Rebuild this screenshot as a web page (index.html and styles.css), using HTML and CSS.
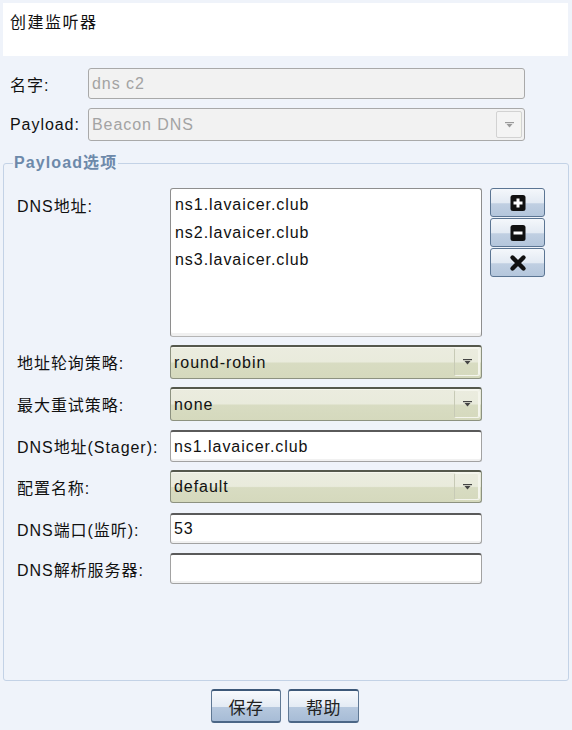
FILE: index.html
```html
<!DOCTYPE html>
<html>
<head>
<meta charset="utf-8">
<link rel="stylesheet" href="styles.css">
</head>
<body>
<div class="header">创建监听器</div>

<div class="top-form">
  <label class="lbl">名字:</label>
  <div class="field disabled">dns c2</div>
  <label class="lbl">Payload:</label>
  <div class="combo disabled">
    <span class="val">Beacon DNS</span>
    <span class="arrow"><svg width="9" height="6" viewBox="0 0 9 6"><rect x="0" y="0" width="9" height="1.2" fill="#9a9a9a"/><path d="M1.5 2h6L4.5 5.5z" fill="#9a9a9a"/></svg></span>
  </div>
</div>

<fieldset class="options">
  <legend>Payload选项</legend>
  <div class="grid">
    <label class="lbl top">DNS地址:</label>
    <div class="list">
      <div class="item">ns1.lavaicer.club</div>
      <div class="item">ns2.lavaicer.club</div>
      <div class="item">ns3.lavaicer.club</div>
    </div>
    <div class="tools">
      <button class="tool"><svg width="18" height="18" viewBox="0 0 18 18"><rect x="1.5" y="1" width="15" height="16" rx="2.5" fill="#111"/><path d="M9 4.5v9M4.5 9h9" stroke="#fff" stroke-width="3"/></svg></button>
      <button class="tool"><svg width="18" height="18" viewBox="0 0 18 18"><rect x="1.5" y="1" width="15" height="16" rx="2.5" fill="#111"/><path d="M4.5 9h9" stroke="#fff" stroke-width="3"/></svg></button>
      <button class="tool"><svg width="18" height="18" viewBox="0 0 18 18"><path d="M3.5 3.5l11 11M14.5 3.5l-11 11" stroke="#111" stroke-width="4.4" stroke-linecap="round"/></svg></button>
    </div>

    <label class="lbl h34">地址轮询策略:</label>
    <div class="combo h34"><span class="val">round-robin</span><span class="arrow"><svg width="9" height="6" viewBox="0 0 9 6"><rect x="0" y="0" width="9" height="1.2" fill="#444"/><path d="M1.5 2h6L4.5 5.5z" fill="#444"/></svg></span></div>
    <span></span>

    <label class="lbl h34">最大重试策略:</label>
    <div class="combo h34"><span class="val">none</span><span class="arrow"><svg width="9" height="6" viewBox="0 0 9 6"><rect x="0" y="0" width="9" height="1.2" fill="#444"/><path d="M1.5 2h6L4.5 5.5z" fill="#444"/></svg></span></div>
    <span></span>

    <label class="lbl h32">DNS地址(Stager):</label>
    <div class="text h32">ns1.lavaicer.club</div>
    <span></span>

    <label class="lbl h33">配置名称:</label>
    <div class="combo h33"><span class="val">default</span><span class="arrow"><svg width="9" height="6" viewBox="0 0 9 6"><rect x="0" y="0" width="9" height="1.2" fill="#444"/><path d="M1.5 2h6L4.5 5.5z" fill="#444"/></svg></span></div>
    <span></span>

    <label class="lbl h31">DNS端口(监听):</label>
    <div class="text h31">53</div>
    <span></span>

    <label class="lbl h31">DNS解析服务器:</label>
    <div class="text h31"></div>
    <span></span>
  </div>
</fieldset>

<div class="actions">
  <button class="btn save">保存</button>
  <button class="btn help">帮助</button>
</div>
</body>
</html>
```

FILE: styles.css
```css
html, body {
  margin: 0;
  padding: 0;
}
body {
  width: 572px;
  height: 730px;
  background: #eff3fa;
  font-family: "Liberation Sans", "Noto Sans CJK SC", sans-serif;
  font-size: 16px;
  color: #111;
  letter-spacing: 0.95px;
  overflow: hidden;
}
.header {
  margin: 3px 4px 0 3px;
  height: 53px;
  background: #fff;
  box-sizing: border-box;
  padding: 9px 0 0 7px;
  font-size: 16px;
  letter-spacing: 1.5px;
  line-height: 22px;
}
.top-form {
  display: grid;
  grid-template-columns: 78px 437px;
  grid-template-rows: 31px 33px;
  row-gap: 9px;
  margin: 12px 0 0 10px;
}
.lbl {
  display: flex;
  align-items: center;
  white-space: nowrap;
}
.lbl.top {
  align-items: flex-start;
  padding-top: 5px;
}
.field, .text {
  box-sizing: border-box;
  border: 1px solid #a9a9a9;
  border-radius: 3px;
  display: flex;
  align-items: center;
  padding-left: 3px;
}
.field.disabled {
  background: #f2f2f2;
  color: #a3a3a3;
}
.combo {
  box-sizing: border-box;
  border-radius: 3px;
  display: flex;
  align-items: stretch;
  border: 1px solid #8d9280;
  border-top: 2px solid #55584c;
  background: linear-gradient(#ebecdf 0%, #e9ebdc 48%, #d8dcc2 52%, #d5d9bd 100%);
  box-shadow: inset 0 1px 0 #f6f6ee;
}
.combo .val {
  flex: 1;
  display: flex;
  align-items: center;
  padding-left: 3px;
}
.combo .arrow {
  width: 26px;
  margin: 1px 1px 2px 0;
  box-sizing: border-box;
  border: 1px solid #f4f5ec;
  border-left-color: #c7cab6;
  box-shadow: -1px 0 0 #f4f5ec inset;
  display: flex;
  align-items: center;
  justify-content: center;
  border-radius: 2px;
}
.combo.disabled {
  background: #f2f2f2;
  border: 1px solid #a9a9a9;
  color: #a3a3a3;
  box-shadow: none;
}
.combo.disabled .arrow {
  margin: 2px 2px 2px 0;
  width: 26px;
  border: 1px solid #d2d2d2;
  background: #f4f4f4;
}
.options {
  margin: 13px 3px 0 3px;
  padding: 16px 13px 96px 13px;
  border: 1px solid #c3d2e6;
  border-radius: 3px;
  min-width: 0;
}
.options legend {
  padding: 0 1px;
  margin-left: -4px;
  font-size: 16px;
  font-weight: bold;
  line-height: 18px;
  color: #6d89aa;
  letter-spacing: 1.1px;
}
.grid {
  display: grid;
  grid-template-columns: 153px 312px 55px;
  grid-template-rows: 149px 34px 34px 33px 33px 33px 32px;
  row-gap: 8px;
}
.grid > * {
  align-self: end;
}
.grid > .lbl.top, .grid > .list, .grid > .tools {
  align-self: stretch;
}
.tools {
  margin-left: 8px;
  display: flex;
  flex-direction: column;
}
.tool {
  width: 55px;
  height: 29px;
  margin: 0 0 1px 0;
  padding: 0;
  box-sizing: border-box;
  border: 1px solid #5b7593;
  border-radius: 3px;
  background: linear-gradient(#f4f7fb 0%, #e3eaf3 50%, #c0cfe2 55%, #b4c6dc 100%);
  display: flex;
  align-items: center;
  justify-content: center;
}
.list {
  box-sizing: border-box;
  background: #fff;
  border: 1px solid #8e8e8e;
  border-bottom-color: #b5b5b5;
  border-radius: 3px;
  padding: 2px 0 0 4px;
  box-shadow: inset 0 -3px 0 #f0f0f0;
}
.item {
  height: 27.5px;
  line-height: 27px;
}
.text {
  background: #fff;
  border: 1px solid #a2a2a2;
  border-top: 2px solid #5a5a5a;
  box-shadow: inset 0 -2px 0 #f1f1f1;
}
.h34 { height: 34px; }
.h33 { height: 33px; }
.h32 { height: 32px; }
.h31 { height: 31px; }
.actions {
  display: flex;
  justify-content: center;
  gap: 7px;
  margin-top: 8px;
  padding-right: 2px;
}
.btn {
  height: 34px;
  box-sizing: border-box;
  padding: 0;
  border: 1px solid #5f7894;
  border-top: 2px solid #3d5878;
  border-bottom: 2px solid #4b6686;
  border-radius: 3px;
  background: linear-gradient(#f8fafd 0%, #e4ebf4 52%, #b6c8de 54%, #a7bcd6 100%);
  font-family: "Noto Sans CJK SC", sans-serif;
  font-size: 17px;
  color: #222;
  letter-spacing: 0.5px;
}
.btn.save { width: 70px; }
.btn.help { width: 71px; }
```
